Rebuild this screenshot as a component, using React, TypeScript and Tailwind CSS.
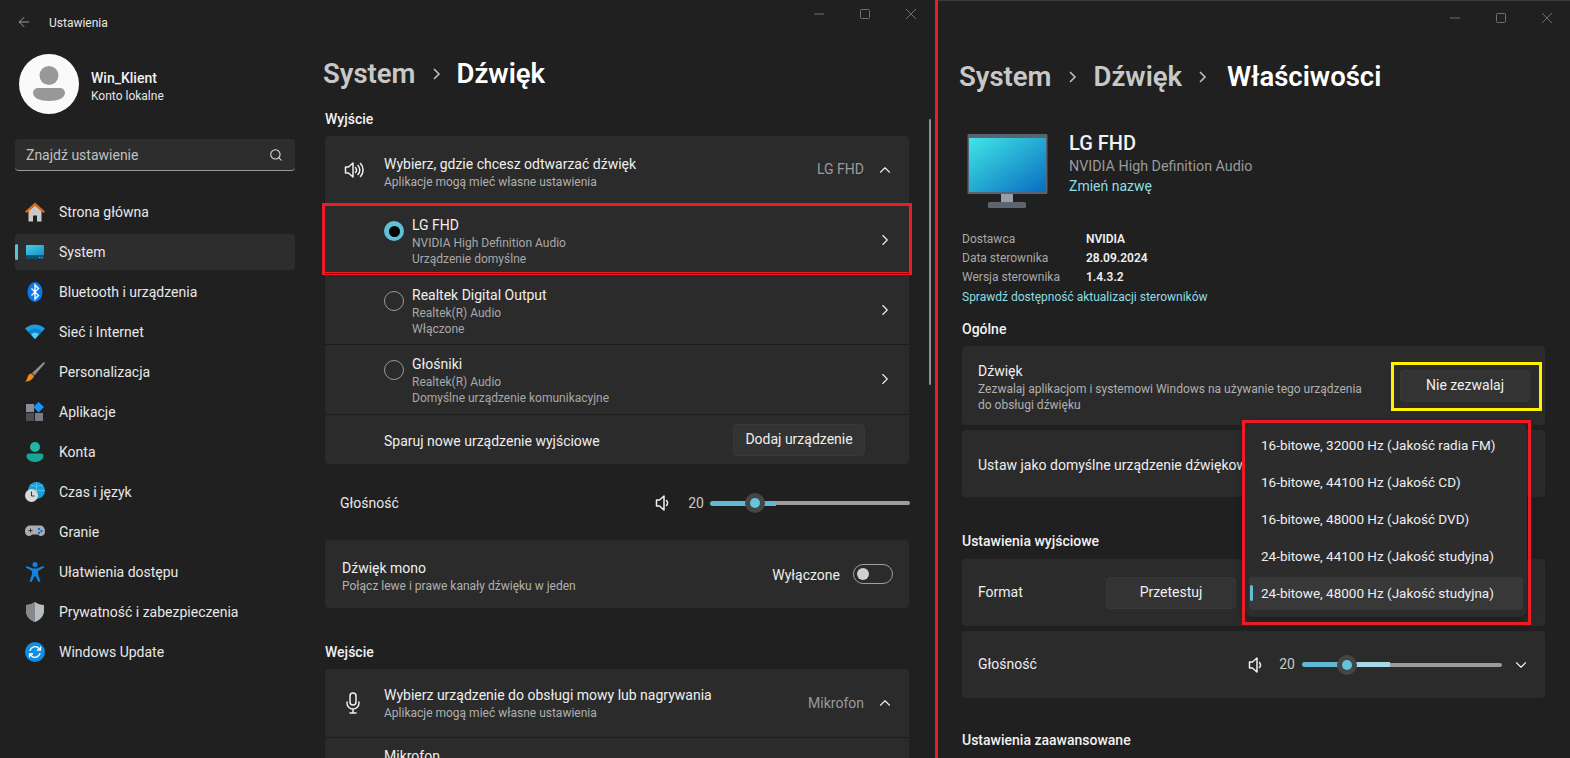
import React from "react";
import { ChevronRight, ChevronUp, ChevronDown, Search, ArrowLeft } from "lucide-react";

const font = { fontFamily: '"Roboto", "Liberation Sans", sans-serif' };

function WinControls() {
  return (
    <div className="flex items-center gap-[36px] h-[28px]">
      <svg width="10" height="10" viewBox="0 0 10 10"><path d="M0 5h10" stroke="#6f6f6f" strokeWidth="1" /></svg>
      <svg width="10" height="10" viewBox="0 0 10 10"><rect x="0.5" y="0.5" width="9" height="9" rx="1" fill="none" stroke="#6f6f6f" /></svg>
      <svg width="10" height="10" viewBox="0 0 10 10"><path d="M0 0l10 10M10 0L0 10" stroke="#6f6f6f" strokeWidth="1" /></svg>
    </div>
  );
}

function Speaker({ waves = false }: { waves?: boolean }) {
  return (
    <svg width="22" height="20" viewBox="0 0 22 20" fill="none" stroke="#efefef" strokeWidth="1.5" strokeLinejoin="round" strokeLinecap="round">
      <path d="M1.5 7h3L9 3v14l-4.5-4h-3z" />
      <path d="M11.5 7.5a3.5 3.5 0 0 1 0 5" />
      {waves && <path d="M14 5.5a6.5 6.5 0 0 1 0 9" />}
      {waves && <path d="M16.5 3.5a9.5 9.5 0 0 1 0 13" />}
    </svg>
  );
}

function Mic() {
  return (
    <svg width="16" height="22" viewBox="0 0 16 22" fill="none" stroke="#efefef" strokeWidth="1.5" strokeLinecap="round">
      <rect x="5" y="1" width="6" height="12" rx="3" />
      <path d="M2 10v1a6 6 0 0 0 12 0v-1M8 17v4M5 21h6" />
    </svg>
  );
}

const IconHome = () => (
  <svg width="20" height="20" viewBox="0 0 20 20">
    <path d="M3.5 9 10 3.5 16.5 9v10.5H12v-6H8v6H3.5z" fill="#c9c9c9" />
    <path d="M10 0.5 0 9.5l1.4 1.4L10 3.4l8.6 7.5L20 9.5z" fill="#e66a0e" />
  </svg>
);
const IconSystem = () => (
  <svg width="20" height="20" viewBox="0 0 20 20">
    <defs><linearGradient id="sys" x1="0" y1="0" x2="1" y2="1"><stop offset="0" stopColor="#45d0e4" /><stop offset="1" stopColor="#1a8cc4" /></linearGradient></defs>
    <rect x="1" y="3" width="18" height="10.5" rx="1" fill="url(#sys)" />
    <path d="M1 13.5h18V16a1 1 0 0 1-1 1H2a1 1 0 0 1-1-1z" fill="#0e4f72" />
    <rect x="14" y="15" width="1" height="1" fill="#7fb6d2" /><rect x="16" y="15" width="1" height="1" fill="#7fb6d2" />
  </svg>
);
const IconBt = () => (
  <svg width="20" height="20" viewBox="0 0 20 20">
    <ellipse cx="10" cy="10" rx="7.5" ry="10" fill="#0a78e6" />
    <path d="M6.5 6.5l7 7L10 17V3l3.5 3.5-7 7" fill="none" stroke="#fff" strokeWidth="1.4" />
  </svg>
);
const IconWifi = () => (
  <svg width="20" height="20" viewBox="0 0 20 20">
    <path d="M0 6.5Q10-1.5 20 6.5L10 17z" fill="#1c9fe0" />
    <path d="M3 9.5Q10 3.5 17 9.5L10 17z" fill="#0f7fd0" />
    <path d="M6 12.2Q10 9 14 12.2L10 17z" fill="#4fd0f5" />
  </svg>
);
const IconBrush = () => (
  <svg width="20" height="20" viewBox="0 0 20 20">
    <path d="M19.5 0.5c.5.4.3 1-.1 1.5L9.5 13.5l-2.5-2.5L18 0.8c.5-.4 1-.6 1.5-.3z" fill="#8e8e8e" />
    <path d="M6.5 11.5l2.5 2.5c-1 3.5-4.5 5.5-9 5.5 2-1 2-3 3-5.5.5-1.3 2-2.5 3.5-2.5z" fill="#f08a1c" />
  </svg>
);
const IconApps = () => (
  <svg width="20" height="20" viewBox="0 0 20 20">
    <rect x="1" y="2" width="8" height="8" fill="#8a8f96" /><rect x="1" y="11" width="8" height="8" fill="#4b4f55" /><rect x="10" y="11" width="8" height="8" fill="#777b82" />
    <path d="M13.5 0l5.5 5-5.5 5.5L8.5 5z" fill="#1e90ff" />
  </svg>
);
const IconUser = () => (
  <svg width="20" height="20" viewBox="0 0 20 20">
    <circle cx="10" cy="5" r="5" fill="#1fb8a6" />
    <path d="M1.5 14a2.5 2.5 0 0 1 2.5-2.5h12a2.5 2.5 0 0 1 2.5 2.5c0 3.5-4 6-8.5 6s-8.5-2.5-8.5-6z" fill="#17a596" />
  </svg>
);
const IconTime = () => (
  <svg width="20" height="20" viewBox="0 0 20 20">
    <circle cx="11.5" cy="8.5" r="8.5" fill="#1c9fd8" />
    <path d="M3 8.5h17M11.5 0v17M5 3q6.5 3 13 0" stroke="#5fd0ee" strokeWidth=".7" fill="none" />
    <circle cx="6.5" cy="13.5" r="6.5" fill="#d8d8d8" />
    <path d="M6.5 9.5v4.5h3" stroke="#333" strokeWidth="1" fill="none" />
  </svg>
);
const IconGame = () => (
  <svg width="20" height="20" viewBox="0 0 20 20">
    <path d="M5 3.5h10c3 0 5 2.5 5 6s-2.5 4.5-4.5 4.5c-1.5 0-2-1.5-3-1.5h-5c-1 0-1.500 1.500-3 1.500C2.500 14 0 13 0 9.500s2-6 5-6z" fill="#a9adb3" />
    <path d="M3.5 8.5h4M5.5 6.5v4" stroke="#333" strokeWidth="1" />
    <circle cx="14" cy="7" r="1.2" fill="#0a6fd6" /><circle cx="16.5" cy="9" r="1.2" fill="#0a6fd6" /><circle cx="14" cy="11" r="1.2" fill="#0a6fd6" />
  </svg>
);
const IconAccess = () => (
  <svg width="20" height="20" viewBox="0 0 20 20">
    <circle cx="10" cy="2.5" r="2.5" fill="#1583dc" />
    <path d="M0.8 5.6l.8-1.6L8 6.5h4L18.4 4l.8 1.6L13 9v3l2.5 7.5-2 .5L10 13.5 6.5 20l-2-.5L7 12V9z" fill="#1583dc" />
  </svg>
);
const IconShield = () => (
  <svg width="20" height="20" viewBox="0 0 20 20">
    <path d="M10 0c2.5 2 6 3 9 3v6c0 5-4 9-9 11-5-2-9-6-9-11V3c3 0 6.500-1 9-3z" fill="#b9bcc0" />
    <path d="M10 0v20c-5-2-9-6-9-11V3c3 0 6.500-1 9-3z" fill="#85898e" />
  </svg>
);
const IconUpdate = () => (
  <svg width="20" height="20" viewBox="0 0 20 20">
    <circle cx="10" cy="10" r="10" fill="#0f8fe0" />
    <path d="M5 9a5.2 5.2 0 0 1 9-2.5l1 1M15 11a5.2 5.2 0 0 1-9 2.5l-1-1" fill="none" stroke="#fff" strokeWidth="1.3" />
    <path d="M15.5 4.5v3.5H12M4.500 15.500V12H8" fill="none" stroke="#fff" strokeWidth="1.3" />
  </svg>
);

const nav: [React.ReactNode, string, boolean?][] = [
  [<IconHome />, "Strona główna"],
  [<IconSystem />, "System", true],
  [<IconBt />, "Bluetooth i urządzenia"],
  [<IconWifi />, "Sieć i Internet"],
  [<IconBrush />, "Personalizacja"],
  [<IconApps />, "Aplikacje"],
  [<IconUser />, "Konta"],
  [<IconTime />, "Czas i język"],
  [<IconGame />, "Granie"],
  [<IconAccess />, "Ułatwienia dostępu"],
  [<IconShield />, "Prywatność i zabezpieczenia"],
  [<IconUpdate />, "Windows Update"],
];

function Sidebar() {
  return (
    <div className="w-[310px] shrink-0 pl-[15px]">
      <div className="flex items-center gap-3 pl-1 mt-[10px]">
        <div className="w-[60px] h-[60px] rounded-full bg-[#fafafa] flex items-center justify-center">
          <svg width="32" height="36" viewBox="0 0 32 36">
            <circle cx="16" cy="9.5" r="9.5" fill="#989898" />
            <path d="M0 27a5 5 0 0 1 5-5h22a5 5 0 0 1 5 5c0 5-7 8-16 8S0 32 0 27z" fill="#989898" />
          </svg>
        </div>
        <div className="mt-[4px]">
          <div className="text-[14px] leading-[20px] font-medium text-[#f2f2f2]">Win_Klient</div>
          <div className="text-[12px] leading-[16px] text-[#e4e4e4]">Konto lokalne</div>
        </div>
      </div>
      <div className="mt-[25px] w-[280px] h-[32px] rounded-[4px] bg-[#2d2d2d] border-b border-[#9a9a9a] flex items-center justify-between pl-[11px] pr-[12px]">
        <span className="text-[14px] text-[#c0c0c0] pt-[2px]">Znajdź ustawienie</span>
        <Search size={14} color="#e0e0e0" strokeWidth={1.8} />
      </div>
      <div className="mt-[23px] w-[280px] flex flex-col gap-1">
        {nav.map(([icon, label, active]) => (
          <div key={label} className={active ? "relative h-9 rounded-[4px] bg-[#2d2d2d] flex items-center pl-[10px] gap-[14px]" : "h-9 rounded-[4px] flex items-center pl-[10px] gap-[14px]"}>
            {active && <div className="absolute left-0 top-[10px] w-[3px] h-[16px] rounded-full bg-[#60c0d8]" />}
            <span className="w-[20px] h-[20px] flex items-center justify-center">{icon}</span>
            <span className="text-[14px] text-[#e8e8e8]">{label}</span>
          </div>
        ))}
      </div>
    </div>
  );
}

function Radio({ on }: { on?: boolean }) {
  return on ? (
    <div className="w-[20px] h-[20px] rounded-full bg-[#60c0d8] flex items-center justify-center shrink-0">
      <div className="w-[11px] h-[11px] rounded-full bg-black" />
    </div>
  ) : (
    <div className="w-[20px] h-[20px] rounded-full border border-[#9a9a9a] shrink-0" />
  );
}

function DeviceRow({ name, a, b, on, h, pad }: { name: string; a: string; b: string; on?: boolean; h: string; pad: string }) {
  return (
    <div className={`relative ${h} ${pad} border-t border-[#1d1d1d] flex items-start pl-[59px] pr-[20px]`}>
      <div className="mt-[6px]"><Radio on={on} /></div>
      <div className="ml-[8px] flex-1">
        <div className="text-[14px] leading-[20px] text-[#efefef]">{name}</div>
        <div className="text-[12px] leading-[16px] text-[#a8a8a8]">{a}</div>
        <div className="text-[12px] leading-[16px] text-[#a8a8a8]">{b}</div>
      </div>
      <ChevronRight size={18} color="#efefef" strokeWidth={1.5} className="mt-[16px] mr-[-5px]" />
      {on && <div className="absolute left-[-3px] right-[-3px] top-[-1px] bottom-[-2px] border-[3px] border-[#ed1c24]" />}
    </div>
  );
}

function Slider({ light }: { light?: boolean }) {
  return (
    <div className="w-[200px] h-[20px] flex items-center relative">
      <div className="w-[46px] h-[5px] rounded-l-full bg-[#60b8d4]" />
      <div className={light ? "w-[42px] h-[5px] bg-[#a6d8e8]" : "w-[20px] h-[5px] bg-[#60b8d4]"} />
      <div className="flex-1 h-[4px] rounded-r-full bg-[#9c9c9c]" />
      <div className="absolute left-[35px] top-0 w-[20px] h-[20px] rounded-full bg-[#454545] flex items-center justify-center">
        <div className="w-[10px] h-[10px] rounded-full bg-[#66c3dc]" />
      </div>
    </div>
  );
}

function Button({ label, w }: { label: string; w: string }) {
  return (
    <div className={`${w} h-[32px] rounded-[4px] bg-[#333333] border border-[#383838] flex items-center justify-center text-[14px] text-[#efefef]`}>{label}</div>
  );
}

function Crumb() {
  return <svg width="10" height="14" viewBox="0 0 10 14" className="mx-[16px]"><path d="M2 2l5 5-5 5" fill="none" stroke="#c0c0c0" strokeWidth="1.6" /></svg>;
}

function LeftMain() {
  return (
    <div className="flex-1 flex">
      <div className="w-[600px] pl-[15px] mt-[10px]">
        <div className="flex items-center h-[40px] -ml-[2px] text-[27.5px] font-semibold">
          <span className="text-[#c8c8c8]">System</span>
          <Crumb />
          <span className="text-white -ml-[1px]">Dźwięk</span>
        </div>
        <div className="mt-[15px] text-[14px] leading-[20px] font-medium text-[#f2f2f2]">Wyjście</div>
        <div className="mt-[7px] w-[584px] rounded-[4px] bg-[#2b2b2b]">
          <div className="h-[67px] flex items-center pl-[19px] pr-[20px]">
            <Speaker waves />
            <div className="ml-[18px] flex-1 mt-[4px]">
              <div className="text-[14px] leading-[20px] text-[#efefef]">Wybierz, gdzie chcesz odtwarzać dźwięk</div>
              <div className="text-[12px] leading-[16px] text-[#b0b0b0]">Aplikacje mogą mieć własne ustawienia</div>
            </div>
            <span className="text-[14px] text-[#9a9a9a]">LG FHD</span>
            <ChevronUp size={18} color="#efefef" strokeWidth={1.5} className="ml-[12px] mr-[-5px]" />
          </div>
          <DeviceRow h="h-[70px]" pad="pt-[11px]" name="LG FHD" a="NVIDIA High Definition Audio" b="Urządzenie domyślne" on />
          <DeviceRow h="h-[71px]" pad="pt-[11px]" name="Realtek Digital Output" a="Realtek(R) Audio" b="Włączone" />
          <DeviceRow h="h-[70px]" pad="pt-[9px]" name="Głośniki" a="Realtek(R) Audio" b="Domyślne urządzenie komunikacyjne" />
          <div className="h-[50px] border-t border-[#1d1d1d] flex items-center justify-between pl-[59px] pr-[44px]">
            <span className="text-[14px] text-[#efefef] pt-[3px]">Sparuj nowe urządzenie wyjściowe</span>
            <Button label="Dodaj urządzenie" w="w-[132px]" />
          </div>
        </div>
        <div className="mt-[29px] flex items-center h-[20px] pl-[15px]">
          <span className="text-[14px] text-[#e8e8e8] flex-1">Głośność</span>
          <span className="mr-[11px] flex"><Speaker /></span>
          <span className="text-[14px] text-[#c8c8c8] mr-[6px]">20</span>
          <Slider />
        </div>
        <div className="mt-[27px] w-[584px] h-[68px] rounded-[4px] bg-[#2b2b2b] flex items-center pl-[17px] pr-[16px]">
          <div className="flex-1 mt-[3px]">
            <div className="text-[14px] leading-[20px] text-[#efefef]">Dźwięk mono</div>
            <div className="text-[12px] leading-[16px] text-[#b0b0b0]">Połącz lewe i prawe kanały dźwięku w jeden</div>
          </div>
          <span className="text-[14px] text-[#efefef] mr-[13px] pt-[3px]">Wyłączone</span>
          <div className="w-[40px] h-[20px] rounded-full border border-[#a0a0a0] flex items-center pl-[3px]">
            <div className="w-[12px] h-[12px] rounded-full bg-[#d0d0d0]" />
          </div>
        </div>
        <div className="mt-[34px] text-[14px] leading-[20px] font-medium text-[#f2f2f2]">Wejście</div>
        <div className="mt-[7px] w-[584px] rounded-[4px] bg-[#2b2b2b]">
          <div className="h-[68px] flex items-center pl-[20px] pr-[20px]">
            <Mic />
            <div className="ml-[23px] flex-1">
              <div className="text-[14px] leading-[20px] text-[#efefef]">Wybierz urządzenie do obsługi mowy lub nagrywania</div>
              <div className="text-[12px] leading-[16px] text-[#b0b0b0]">Aplikacje mogą mieć własne ustawienia</div>
            </div>
            <span className="text-[14px] text-[#9a9a9a]">Mikrofon</span>
            <ChevronUp size={18} color="#efefef" strokeWidth={1.5} className="ml-[12px] mr-[-5px]" />
          </div>
          <div className="border-t border-[#1d1d1d] pl-[59px] pt-[8px] h-[40px]">
            <div className="text-[14px] leading-[20px] text-[#efefef]">Mikrofon</div>
          </div>
        </div>
      </div>
      <div className="ml-[19px] mt-[75px] w-[2px] h-[266px] rounded-full bg-[#8f8f8f]" />
    </div>
  );
}

function Card({ h, children }: { h: string; children: React.ReactNode }) {
  return <div className={`${h} w-[583px] rounded-[4px] bg-[#2b2b2b] flex items-center pl-[16px]`}>{children}</div>;
}

const formats = [
  "16-bitowe, 32000 Hz (Jakość radia FM)",
  "16-bitowe, 44100 Hz (Jakość CD)",
  "16-bitowe, 48000 Hz (Jakość DVD)",
  "24-bitowe, 44100 Hz (Jakość studyjna)",
  "24-bitowe, 48000 Hz (Jakość studyjna)",
];

function RightWindow() {
  return (
    <div className="relative flex-1 border-t border-[#3a3a3a] pl-[24px]">
      <div className="flex justify-end pr-[18px] pt-[3px]"><WinControls /></div>
      <div className="flex items-center h-[40px] mt-[25px] -ml-[3px] text-[27.5px] font-semibold">
        <span className="text-[#c8c8c8]">System</span>
        <Crumb />
        <span className="text-[#c8c8c8]">Dźwięk</span>
        <Crumb />
        <span className="text-white ml-[3px]">Właściwości</span>
      </div>
      <div className="mt-[37px] flex">
        <svg width="82" height="74" viewBox="0 0 82 74" className="ml-[5px]">
          <defs><linearGradient id="mon" x1="0" y1="0" x2="1" y2="1"><stop offset="0" stopColor="#3fe6e6" /><stop offset="1" stopColor="#0a6cc0" /></linearGradient></defs>
          <rect x="0.5" y="0" width="80" height="60" rx="1.5" fill="#5a6470" />
          <rect x="2" y="4" width="77" height="54" fill="url(#mon)" />
          <rect x="34" y="60" width="12" height="9" fill="#97a0a8" />
          <rect x="21" y="68" width="38" height="6" rx="1.5" fill="#5d666f" />
        </svg>
        <div className="ml-[20px]">
          <div className="text-[20px] leading-[20px] font-medium text-[#f2f2f2] -mt-[1px]">LG FHD</div>
          <div className="text-[14.3px] leading-[20px] text-[#9a9a9a] mt-[3px]">NVIDIA High Definition Audio</div>
          <div className="text-[14px] leading-[20px] text-[#8fdde0]">Zmień nazwę</div>
        </div>
      </div>
      <div className="mt-[21px] grid grid-cols-[124px_1fr] auto-rows-[19px] text-[12px] items-center">
        <span className="text-[#a8a8a8]">Dostawca</span><span className="font-semibold text-[#efefef]">NVIDIA</span>
        <span className="text-[#a8a8a8]">Data sterownika</span><span className="font-semibold text-[#efefef]">28.09.2024</span>
        <span className="text-[#a8a8a8]">Wersja sterownika</span><span className="font-semibold text-[#efefef]">1.4.3.2</span>
      </div>
      <div className="mt-[3px] text-[12px] leading-[16px] text-[#8fdde0]">Sprawdź dostępność aktualizacji sterowników</div>
      <div className="mt-[14px] text-[14px] leading-[20px] font-medium text-[#f2f2f2]">Ogólne</div>
      <div className="mt-[7px] flex flex-col gap-[5px]">
        <Card h="h-[79px]">
          <div className="flex-1 mt-[2px]">
            <div className="text-[14px] leading-[20px] text-[#efefef]">Dźwięk</div>
            <div className="text-[12px] leading-[16px] text-[#b0b0b0] w-[400px]">Zezwalaj aplikacjom i systemowi Windows na używanie tego urządzenia do obsługi dźwięku</div>
          </div>
          <div className="relative mr-[15px]">
            <Button label="Nie zezwalaj" w="w-[130px]" />
            <div className="absolute left-[-9px] right-[-12px] top-[-8px] bottom-[-9px] border-[3px] border-[#fff200]" />
          </div>
        </Card>
        <Card h="h-[67px]">
          <span className="text-[14px] text-[#efefef] pt-[3px]">Ustaw jako domyślne urządzenie dźwiękowe</span>
        </Card>
      </div>
      <div className="mt-[34px] text-[14px] leading-[20px] font-medium text-[#f2f2f2]">Ustawienia wyjściowe</div>
      <div className="mt-[8px] flex flex-col gap-[5px]">
        <Card h="h-[67px]">
          <span className="text-[14px] text-[#efefef] w-[128px]">Format</span>
          <Button label="Przetestuj" w="w-[130px]" />
        </Card>
        <Card h="h-[67px]">
          <span className="text-[14px] text-[#efefef] flex-1">Głośność</span>
          <span className="mr-[9px] flex"><Speaker /></span>
          <span className="text-[14px] text-[#c8c8c8] mr-[7px]">20</span>
          <Slider light />
          <ChevronDown size={18} color="#efefef" strokeWidth={1.5} className="ml-[10px] mr-[15px]" />
        </Card>
      </div>
      <div className="mt-[32px] text-[14px] leading-[20px] font-medium text-[#f2f2f2]">Ustawienia zaawansowane</div>

      <div className="absolute left-[307px] top-[422px] w-[282px] h-[194px] rounded-[8px] bg-[#2c2c2c] shadow-[0_4px_12px_rgba(0,0,0,0.4)] flex flex-col pt-[6px] px-[4px] gap-[4px]">
        {formats.map((f, i) => (
          <div key={f} className={i === 4 ? "relative h-[33px] rounded-[4px] bg-[#383838] flex items-center pl-[12px] text-[13.5px] text-[#efefef]" : "h-[33px] flex items-center pl-[12px] text-[13.5px] text-[#efefef]"}>
            {i === 4 && <div className="absolute left-[1px] top-[8px] w-[3px] h-[16px] rounded-full bg-[#60c0d8]" />}
            {f}
          </div>
        ))}
      </div>
      <div className="absolute left-[304px] top-[419px] w-[289px] h-[205px] border-[3px] border-[#ed1c24]" />
    </div>
  );
}

export default function App() {
  return (
    <div className="w-[1570px] h-[758px] overflow-hidden bg-[#202020] flex" style={font}>
      <div className="w-[935px] shrink-0 flex flex-col">
        <div className="h-[44px] shrink-0 flex items-start justify-between pl-[16px] pr-[19px]">
          <div className="flex items-center h-[44px]">
            <ArrowLeft size={16} color="#b8b8b8" strokeWidth={1.2} />
            <span className="ml-[17px] text-[12px] text-[#e8e8e8] pt-[2px]">Ustawienia</span>
          </div>
          <WinControls />
        </div>
        <div className="flex flex-1">
          <Sidebar />
          <LeftMain />
        </div>
      </div>
      <div className="w-[3px] shrink-0 bg-[#ed1c24]" />
      <RightWindow />
    </div>
  );
}
